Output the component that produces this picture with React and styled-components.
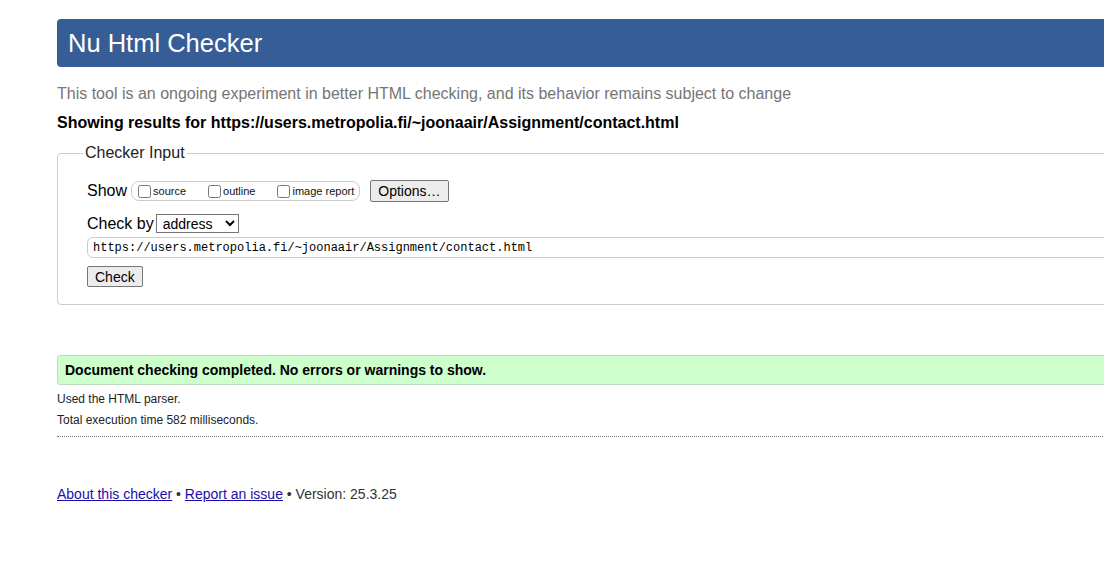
import React from "react";
import styled, { createGlobalStyle } from "styled-components";

const GlobalStyle = createGlobalStyle`
  html, body {
    margin: 0;
    padding: 0;
    overflow: hidden;
    background: #fff;
  }
  body {
    font-family: "Liberation Sans", Arial, sans-serif;
    color: #000;
  }
`;

const Page = styled.div`
  width: 1180px;
  padding: 19px 0 40px 57px;
`;

const Header = styled.h1`
  margin: 0;
  height: 48px;
  line-height: 48px;
  padding: 0 11px;
  background: #365d95;
  border-radius: 4px;
  color: #fff;
  font-size: 25.5px;
  font-weight: normal;
`;

const Intro = styled.p`
  margin: 18px 0 0;
  font-size: 16px;
  line-height: 18px;
  color: #757575;
`;

const Results = styled.p`
  margin: 11px 0 0;
  font-size: 16px;
  line-height: 18px;
  font-weight: bold;
`;

const Fieldset = styled.fieldset`
  margin: 12px 0 0;
  padding: 4px 0 17px 29px;
  border: 1px solid #ccc;
  border-radius: 4px;
`;

const Legend = styled.legend`
  margin-left: -4px;
  padding: 0 2px;
  font-size: 16px;
  line-height: 18px;
  color: #222;
`;

const Row = styled.div`
  display: flex;
  align-items: center;
  margin-top: ${(p) => p.$top || 0}px;
`;

const Label = styled.span`
  font-size: 16px;
  line-height: 18px;
  margin-right: ${(p) => p.$gap || 4}px;
`;

const Group = styled.span`
  display: inline-flex;
  align-items: center;
  height: 18px;
  padding: 0 5px 0 6px;
  border: 1px solid #ccc;
  border-radius: 8px;
  gap: 22px;
`;

const Option = styled.label`
  display: inline-flex;
  align-items: center;
  font-size: 11px;
  color: #111;
  input {
    margin: 0 2px 0 0;
    width: 13px;
    height: 13px;
  }
`;

const Button = styled.button`
  font-family: "Liberation Sans", Arial, sans-serif;
  font-size: 14px;
  height: ${(p) => p.$h || 21}px;
  padding: 0 ${(p) => p.$px || 6}px;
  background: #ececec;
  color: #000;
  border: 1px solid #767676;
  border-radius: 2px;
  margin-left: ${(p) => p.$left || 0}px;
`;

const Select = styled.select`
  font-family: "Liberation Sans", Arial, sans-serif;
  font-size: 14px;
  width: 83px;
  height: 19px;
  padding: 0 2px;
  border: 1px solid #767676;
  border-radius: 0;
  background: #fff;
  color: #000;
`;

const UrlInput = styled.input`
  display: block;
  box-sizing: border-box;
  width: 1080px;
  height: 21px;
  margin-top: 4px;
  padding: 0 5px;
  font-family: "Liberation Mono", "Courier New", monospace;
  font-size: 12px;
  color: #000;
  border: 1px solid #ccc;
  border-radius: 6px;
  outline: none;
`;

const Success = styled.div`
  margin-top: 50px;
  height: 28px;
  line-height: 28px;
  padding: 0 7px;
  background: #ccffcc;
  border: 1px solid #c2d8c2;
  border-radius: 3px;
  font-size: 14px;
  font-weight: bold;
`;

const Note = styled.p`
  margin: ${(p) => p.$top || 0}px 0 0;
  font-size: 12px;
  line-height: 14px;
  color: #222;
`;

const Rule = styled.hr`
  margin: 9px 0 0;
  border: 0;
  border-top: 1px dotted #777;
  height: 0;
`;

const Footer = styled.p`
  margin: 49px 0 0;
  font-size: 14px;
  line-height: 16px;
  color: #333;
  a {
    color: #1a0dab;
    text-decoration: underline;
  }
`;

export default function App() {
  return (
    <Page>
      <GlobalStyle />
      <Header>Nu Html Checker</Header>
      <Intro>
        This tool is an ongoing experiment in better HTML checking, and its
        behavior remains subject to change
      </Intro>
      <Results>
        Showing results for
        https://users.metropolia.fi/~joonaair/Assignment/contact.html
      </Results>
      <Fieldset>
        <Legend>Checker Input</Legend>
        <Row $top={14}>
          <Label>Show</Label>
          <Group>
            <Option>
              <input type="checkbox" />
              source
            </Option>
            <Option>
              <input type="checkbox" />
              outline
            </Option>
            <Option>
              <input type="checkbox" />
              image report
            </Option>
          </Group>
          <Button $left={10} $h={22} $px={7}>
            Options…
          </Button>
        </Row>
        <Row $top={12}>
          <Label $gap={2}>Check by</Label>
          <Select defaultValue="address">
            <option value="address">address</option>
            <option value="file">file upload</option>
            <option value="text">text input</option>
          </Select>
        </Row>
        <UrlInput
          type="url"
          defaultValue="https://users.metropolia.fi/~joonaair/Assignment/contact.html"
        />
        <Row $top={8}>
          <Button $h={21} $px={7}>
            Check
          </Button>
        </Row>
      </Fieldset>
      <Success>Document checking completed. No errors or warnings to show.</Success>
      <Note $top={7}>Used the HTML parser.</Note>
      <Note $top={7}>Total execution time 582 milliseconds.</Note>
      <Rule />
      <Footer>
        <a href="#about">About this checker</a> •{" "}
        <a href="#report">Report an issue</a> • Version: 25.3.25
      </Footer>
    </Page>
  );
}
